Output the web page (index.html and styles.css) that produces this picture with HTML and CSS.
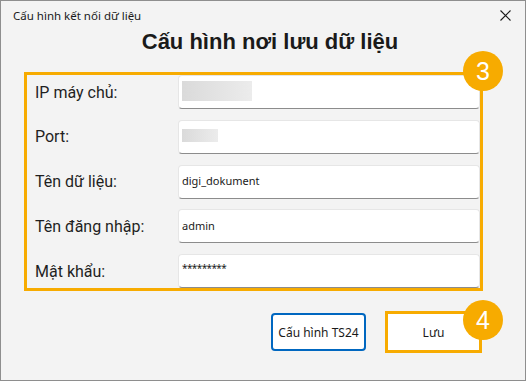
FILE: index.html
```html
<!DOCTYPE html>
<html>
<head>
<title>Cấu hình kết nối dữ liệu</title>
<link rel="stylesheet" href="styles.css">
</head>
<body>

<div class="window">
  <div class="titlebar">
    <span class="titlebar-text">Cấu hình kết nối dữ liệu</span>
    <svg class="close-icon" width="11" height="11" viewBox="0 0 11 11">
      <path d="M0.5 0.5 L10.5 10.5 M10.5 0.5 L0.5 10.5" stroke="#1a1a1a" stroke-width="1.1" fill="none"/>
    </svg>
  </div>

  <h1 class="heading">Cấu hình nơi lưu dữ liệu</h1>

  <div class="form-box">
    <span class="badge badge-3">3</span>

    <div class="row">
      <label class="label">IP máy chủ:</label>
      <div class="input"><span class="blurred blurred-ip"></span></div>
    </div>
    <div class="row">
      <label class="label">Port:</label>
      <div class="input"><span class="blurred blurred-port"></span></div>
    </div>
    <div class="row">
      <label class="label">Tên dữ liệu:</label>
      <div class="input">digi_dokument</div>
    </div>
    <div class="row">
      <label class="label">Tên đăng nhập:</label>
      <div class="input">admin</div>
    </div>
    <div class="row">
      <label class="label">Mật khẩu:</label>
      <div class="input password">*********</div>
    </div>
  </div>

  <div class="actions">
    <button class="btn btn-ts24">Cấu hình TS24</button>
    <button class="btn btn-save">Lưu<span class="badge badge-4">4</span></button>
  </div>
</div>

</body>
</html>
```

FILE: styles.css
```css
body {
    margin: 0;
    background-color: #ffffff;
    font-family: "Noto Sans", sans-serif;
}
.window {
    width: 526px;
    height: 381px;
    box-sizing: border-box;
    border: 1px solid #8e8e8e;
    background-color: #f3f3f3;
}
.titlebar {
    height: 28px;
    display: flex;
    justify-content: space-between;
    align-items: center;
    padding: 0 14px 0 12px;
    color: #1a1a1a;
    font-size: 11.5px;
}
.close-icon {
    display: block;
}
.heading {
    margin: 0;
    padding-left: 14px;
    font-family: "Liberation Sans", Arial, sans-serif;
    font-size: 22px;
    line-height: 26px;
    font-weight: bold;
    text-align: center;
    color: #1a1a1a;
}
.form-box {
    position: relative;
    margin: 17px 42px 0 23px;
    border: 3px solid #f7ab00;
    display: flex;
    flex-direction: column;
    gap: 10.75px;
}
.row {
    display: grid;
    grid-template-columns: 151px 1fr;
    align-items: center;
    height: 34px;
}
.label {
    padding-left: 8px;
    font-family: Roboto, sans-serif;
    font-size: 16px;
    color: #1f1f1f;
}
.input {
    height: 34px;
    box-sizing: border-box;
    display: flex;
    align-items: center;
    padding: 0 0 2px 3px;
    background-color: #ffffff;
    border: 1px solid #e6e6e6;
    border-bottom-color: #8c8c8c;
    border-radius: 4px;
    font-size: 11px;
    color: #1a1a1a;
}
.password {
    font-size: 10px;
    letter-spacing: -0.6px;
    padding-bottom: 6px;
}
.blurred {
    display: block;
    background: linear-gradient(90deg, #dadada, #ececec);
    filter: blur(0.6px);
}
.blurred-ip {
    width: 70px;
    height: 20px;
}
.blurred-port {
    width: 36px;
    height: 13px;
}
.badge {
    position: absolute;
    width: 40px;
    height: 40px;
    border-radius: 50%;
    background-color: #f7ab00;
    color: #ffffff;
    font-family: "Liberation Sans", Arial, sans-serif;
    font-size: 25px;
    line-height: 40px;
    text-align: center;
}
.badge-3 {
    top: -24px;
    right: -23px;
}
.actions {
    display: flex;
    justify-content: flex-end;
    align-items: center;
    gap: 19px;
    margin: 20px 43px 0 0;
}
.btn {
    padding: 0;
    white-space: nowrap;
    font-family: "Noto Sans", sans-serif;
    font-size: 12px;
    color: #1a1a1a;
    background-color: #ffffff;
    cursor: pointer;
}
.btn-ts24 {
    width: 95px;
    height: 38px;
    border: 2px solid #0067c0;
    border-radius: 4px;
}
.btn-save {
    position: relative;
    width: 97px;
    height: 42px;
    border: 3px solid #f7ab00;
    border-radius: 0;
}
.badge-4 {
    top: -14px;
    right: -24px;
}
```
